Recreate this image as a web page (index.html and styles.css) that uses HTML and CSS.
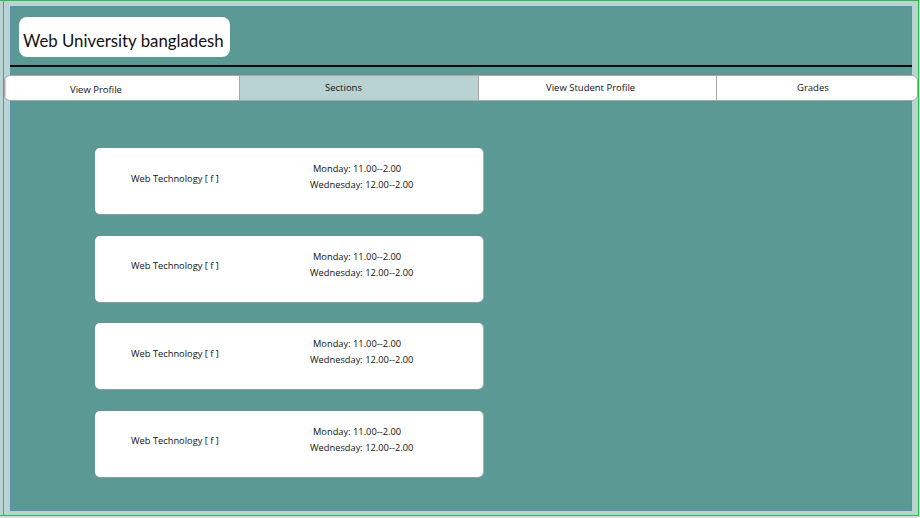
FILE: index.html
```html
<!DOCTYPE html>
<html>
<head>
<meta charset="utf-8">
<link rel="stylesheet" href="styles.css">
</head>
<body>
<div class="frame">
  <div class="panel">
    <div class="brand">Web University bangladesh</div>
    <div class="rule"></div>
    <nav class="tabs">
      <div class="tab tab-profile">View Profile</div>
      <div class="tab tab-sections active">Sections</div>
      <div class="tab tab-student">View Student Profile</div>
      <div class="tab tab-grades">Grades</div>
    </nav>
    <div class="cards">
      <div class="card">
        <div class="course">Web Technology [ f ]</div>
        <div class="times">
          <div class="t1">Monday: 11.00--2.00</div>
          <div class="t2">Wednesday: 12.00--2.00</div>
        </div>
      </div>
      <div class="card">
        <div class="course">Web Technology [ f ]</div>
        <div class="times">
          <div class="t1">Monday: 11.00--2.00</div>
          <div class="t2">Wednesday: 12.00--2.00</div>
        </div>
      </div>
      <div class="card">
        <div class="course">Web Technology [ f ]</div>
        <div class="times">
          <div class="t1">Monday: 11.00--2.00</div>
          <div class="t2">Wednesday: 12.00--2.00</div>
        </div>
      </div>
      <div class="card">
        <div class="course">Web Technology [ f ]</div>
        <div class="times">
          <div class="t1">Monday: 11.00--2.00</div>
          <div class="t2">Wednesday: 12.00--2.00</div>
        </div>
      </div>
    </div>
  </div>
</div>
</body>
</html>
```
FILE: styles.css
```css
html, body {
  margin: 0;
  padding: 0;
}
body {
  width: 920px;
  height: 518px;
  background: #dcdcdc;
  font-family: "Open Sans", "Noto Sans", sans-serif;
  color: #111;
  overflow: hidden;
}
.frame {
  box-sizing: border-box;
  width: 919px;
  height: 516px;
  padding: 5px 6px 4px 10px;
  background:
    linear-gradient(#22c443, #22c443) 3px 0 / 1px 100% no-repeat,
    #b9d4d3;
  border-top: 1px solid #22c443;
  border-right: 1px solid #22c443;
  border-bottom: 1px solid #22c443;
}
.panel {
  box-sizing: border-box;
  width: 902px;
  height: 505px;
  background: #5b9994;
  border: 1px solid #5b8fae;
  padding-top: 10px;
  display: flex;
  flex-direction: column;
}
.brand {
  align-self: flex-start;
  margin-left: 8px;
  width: 211px;
  height: 40px;
  box-sizing: border-box;
  background: #fff;
  border-radius: 8px;
  font-family: "Lato", sans-serif;
  font-size: 16.8px;
  line-height: 1;
  padding: 16px 0 0 4px;
  color: #111;
  white-space: nowrap;
}
.rule {
  margin-top: 8px;
  height: 2px;
  background: #0a0a0a;
  margin-left: -1px;
  margin-right: -1px;
}
.tabs {
  margin: 8px -7px 0 -7px;
  height: 26px;
  box-sizing: border-box;
  display: flex;
  background: #fff;
  border: 1px solid #a6a6a6;
  border-radius: 6px;
  overflow: hidden;
}
.tab {
  box-sizing: border-box;
  height: 100%;
  font-size: 9.5px;
  line-height: 24px;
  color: #111;
  white-space: nowrap;
  border-right: 1px solid #a6a6a6;
}
.tab:last-child { border-right: none; }
.tab-profile {
  width: 235px;
  padding-left: 65px;
  padding-top: 2px;
  box-shadow: inset 6px 0 0 -5px #bcd6ee;
}
.tab-sections { width: 239px; padding-left: 85px; }
.tab-student { width: 238px; padding-left: 67px; }
.tab-grades { flex: 1; padding-left: 80px; }
.active { background: #b9d3d2; }
.cards {
  margin-top: 47px;
  margin-left: 84px;
  display: flex;
  flex-direction: column;
  gap: 21.6px;
}
.card {
  box-sizing: border-box;
  width: 388px;
  height: 66px;
  padding-bottom: 8px;
  background: #fff;
  border-radius: 5px;
  box-shadow: 0 1px 0 #9a9a9a, 1px 0 0 #b0b0b0;
  display: flex;
  align-items: center;
  font-size: 9.3px;
  color: #111;
}
.course {
  width: 179px;
  padding-left: 36px;
  padding-top: 2px;
  white-space: nowrap;
}
.times {
  display: flex;
  flex-direction: column;
  line-height: 16px;
  white-space: nowrap;
}
.t1 { padding-left: 3px; }
```
